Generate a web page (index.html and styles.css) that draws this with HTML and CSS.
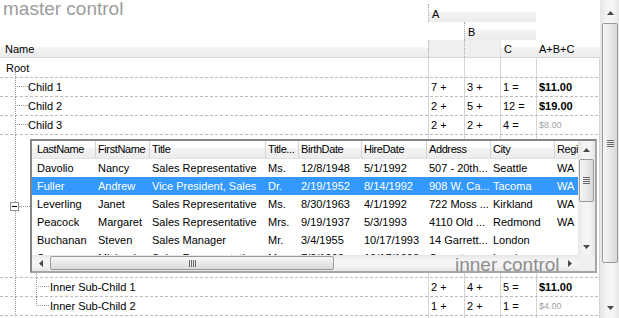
FILE: index.html
```html
<!DOCTYPE html>
<html>
<head>
<meta charset="utf-8">
<title>master control</title>
<link rel="stylesheet" href="styles.css">
</head>
<body>
<div class="grid">
  <div class="main">
    <div class="header">
      <div class="hrow">
        <div class="hcell span-a">A</div>
      </div>
      <div class="hrow">
        <div class="hcell span-b">B</div>
      </div>
      <div class="hrow hrow3">
        <div class="hcell hname">Name</div>
        <div class="hcell hsub"></div>
        <div class="hcell hsub hsub-b"></div>
        <div class="hcell hsep">C</div>
        <div class="hcell">A+B+C</div>
      </div>
    </div>
    <div class="body">
      <div class="row root-row">
        <div class="nm t-root">Root</div>
      </div>
      <div class="row">
        <div class="nm t-child">Child 1</div>
        <div class="v">7 +</div><div class="v">3 +</div><div class="v">1 =</div><div class="v sum">$11.00</div>
      </div>
      <div class="row">
        <div class="nm t-child">Child 2</div>
        <div class="v">2 +</div><div class="v">5 +</div><div class="v">12 =</div><div class="v sum">$19.00</div>
      </div>
      <div class="row">
        <div class="nm t-child">Child 3</div>
        <div class="v">2 +</div><div class="v">2 +</div><div class="v">4 =</div><div class="v sum dim">$8.00</div>
      </div>
      <div class="big">
        <div class="t-big"><span class="exp"></span></div>
        <div class="inner">
          <div class="inner-grid">
            <div class="table">
              <div class="ihead">
                <div class="ic">LastName</div><div class="ic">FirstName</div><div class="ic">Title</div><div class="ic">Title...</div><div class="ic">BirthDate</div><div class="ic">HireDate</div><div class="ic">Address</div><div class="ic">City</div><div class="ic">Region</div>
              </div>
              <div class="irow">
                <div class="ic">Davolio</div><div class="ic">Nancy</div><div class="ic">Sales Representative</div><div class="ic">Ms.</div><div class="ic">12/8/1948</div><div class="ic">5/1/1992</div><div class="ic">507 - 20th...</div><div class="ic">Seattle</div><div class="ic">WA</div>
              </div>
              <div class="irow sel">
                <div class="ic">Fuller</div><div class="ic">Andrew</div><div class="ic">Vice President, Sales</div><div class="ic">Dr.</div><div class="ic">2/19/1952</div><div class="ic">8/14/1992</div><div class="ic">908 W. Ca...</div><div class="ic">Tacoma</div><div class="ic">WA</div>
              </div>
              <div class="irow">
                <div class="ic">Leverling</div><div class="ic">Janet</div><div class="ic">Sales Representative</div><div class="ic">Ms.</div><div class="ic">8/30/1963</div><div class="ic">4/1/1992</div><div class="ic">722 Moss ...</div><div class="ic">Kirkland</div><div class="ic">WA</div>
              </div>
              <div class="irow">
                <div class="ic">Peacock</div><div class="ic">Margaret</div><div class="ic">Sales Representative</div><div class="ic">Mrs.</div><div class="ic">9/19/1937</div><div class="ic">5/3/1993</div><div class="ic">4110 Old ...</div><div class="ic">Redmond</div><div class="ic">WA</div>
              </div>
              <div class="irow">
                <div class="ic">Buchanan</div><div class="ic">Steven</div><div class="ic">Sales Manager</div><div class="ic">Mr.</div><div class="ic">3/4/1955</div><div class="ic">10/17/1993</div><div class="ic">14 Garrett...</div><div class="ic">London</div><div class="ic"></div>
              </div>
              <div class="irow">
                <div class="ic">Suyama</div><div class="ic">Michael</div><div class="ic">Sales Representative</div><div class="ic">Mr.</div><div class="ic">7/2/1963</div><div class="ic">10/17/1993</div><div class="ic">Coventry ...</div><div class="ic">London</div><div class="ic"></div>
              </div>
            </div>
            <div class="sb-v small">
              <div class="btn"><svg width="7" height="4" viewBox="0 0 7 4"><path d="M0 4H7L3.5 0Z" fill="#4a4a4a"/></svg></div>
              <div class="track">
                <div class="thumb thumb-v ithumb"><svg width="7" height="7" viewBox="0 0 7 7"><path d="M0 .5H7M0 2.5H7M0 4.5H7M0 6.5H7" stroke="#6a6a6a"/></svg></div>
              </div>
              <div class="btn"><svg width="7" height="4" viewBox="0 0 7 4"><path d="M0 0H7L3.5 4Z" fill="#4a4a4a"/></svg></div>
            </div>
            <div class="sb-h">
              <div class="btn"><svg width="4" height="7" viewBox="0 0 4 7"><path d="M4 0V7L0 3.5Z" fill="#4a4a4a"/></svg></div>
              <div class="track-h">
                <div class="thumb thumb-h"><svg width="7" height="7" viewBox="0 0 7 7"><path d="M.5 0V7M2.5 0V7M4.5 0V7M6.5 0V7" stroke="#6a6a6a"/></svg></div>
              </div>
              <div class="btn"><svg width="4" height="7" viewBox="0 0 4 7"><path d="M0 0V7L4 3.5Z" fill="#4a4a4a"/></svg></div>
            </div>
            <div class="corner"></div>
          </div>
          <div class="caption inner-cap">inner control</div>
        </div>
      </div>
      <div class="row">
        <div class="nm t-sub">Inner Sub-Child 1</div>
        <div class="v">2 +</div><div class="v">4 +</div><div class="v">5 =</div><div class="v sum">$11.00</div>
      </div>
      <div class="row">
        <div class="nm t-sub t-sub-last">Inner Sub-Child 2</div>
        <div class="v">1 +</div><div class="v">2 +</div><div class="v">1 =</div><div class="v sum dim">$4.00</div>
      </div>
    </div>
  </div>
  <div class="sb-v outer">
    <div class="btn"><svg width="7" height="4" viewBox="0 0 7 4"><path d="M0 4H7L3.5 0Z" fill="#4a4a4a"/></svg></div>
    <div class="track">
      <div class="thumb thumb-v othumb"><svg width="7" height="7" viewBox="0 0 7 7"><path d="M0 .5H7M0 2.5H7M0 4.5H7M0 6.5H7" stroke="#6a6a6a"/></svg></div>
    </div>
    <div class="btn"><svg width="7" height="4" viewBox="0 0 7 4"><path d="M0 0H7L3.5 4Z" fill="#4a4a4a"/></svg></div>
  </div>
  <div class="caption master-cap">master control</div>
</div>
</body>
</html>
```

FILE: styles.css
```css
* { box-sizing: border-box; }
html, body { margin: 0; padding: 0; background: #fff; }
body { font: 11px/1 "Liberation Sans", Arial, sans-serif; color: #000; }

.grid { position: relative; width: 619px; height: 318px; display: flex; overflow: hidden; background: #fff; }
.main { width: 600px; flex: none; display: flex; flex-direction: column; }

/* ---------- header ---------- */
.header { height: 58px; padding-top: 4px; flex: none; }
.hrow { display: grid; grid-template-columns: 428px 36px 36px 36px 64px; height: 18px; }
.hcell {
  display: flex; align-items: center; padding: 3px 0 0 3px; white-space: nowrap;
  background: linear-gradient(#fff 0, #fff 40%, #f3f3f3 45%, #ececec 100%);
}
.span-a { grid-column: 2 / 5; border-left: 1px dotted #a8a8a8; }
.span-b { grid-column: 3 / 5; border-left: 1px dotted #a8a8a8; }
.hrow3 { border-bottom: 1px solid #d5d5d5; }
.hrow3 .hcell { padding-top: 2px; }
.hname { padding-left: 5px; }
.hsub { background: #efefef; border-left: 1px dotted #a8a8a8; }
.hsep { border-left: 1px dotted #d0d0d0; }

/* ---------- body ---------- */
.body {
  flex: 1; overflow: hidden;
  background:
    linear-gradient(#d4d4d4, #d4d4d4) 428px 0 / 1px 100% no-repeat,
    linear-gradient(#d4d4d4, #d4d4d4) 464px 0 / 1px 100% no-repeat,
    linear-gradient(#d4d4d4, #d4d4d4) 500px 0 / 1px 100% no-repeat,
    linear-gradient(#d4d4d4, #d4d4d4) 536px 0 / 1px 100% no-repeat,
    linear-gradient(#d4d4d4, #d4d4d4) 599px 0 / 1px 100% no-repeat;
}
.row {
  display: grid; grid-template-columns: 428px 36px 36px 36px 64px;
  height: 19px; padding-bottom: 1px; align-items: center;
  background: repeating-linear-gradient(90deg, #bdbdbd 0 3px, transparent 3px 5px) 0 100% / 100% 1px no-repeat;
}
.root-row { height: 20px; padding-top: 1px; }
.v { padding-left: 3px; white-space: nowrap; }
.sum { font-weight: bold; }
.dim { font-weight: normal; font-size: 9px; color: #a3a3a3; }

.nm { align-self: stretch; display: flex; align-items: center; white-space: nowrap; margin-bottom: -1px; padding-bottom: 1px; }
.t-root {
  padding-left: 6px;
  background: repeating-linear-gradient(#999 0 1px, transparent 1px 2px) 15px 100% / 1px 6px no-repeat;
}
.t-child {
  padding-left: 28px;
  background:
    repeating-linear-gradient(#999 0 1px, transparent 1px 2px) 15px 0 / 1px 100% no-repeat,
    repeating-linear-gradient(90deg, #999 0 1px, transparent 1px 2px) 17px 8px / 11px 1px no-repeat;
}
.t-sub {
  padding-left: 50px;
  background:
    repeating-linear-gradient(#999 0 1px, transparent 1px 2px) 15px 0 / 1px 100% no-repeat,
    repeating-linear-gradient(#999 0 1px, transparent 1px 2px) 36px 0 / 1px 100% no-repeat,
    repeating-linear-gradient(90deg, #999 0 1px, transparent 1px 2px) 38px 8px / 11px 1px no-repeat;
}
.t-sub-last {
  background:
    repeating-linear-gradient(#999 0 1px, transparent 1px 2px) 15px 0 / 1px 100% no-repeat,
    repeating-linear-gradient(#999 0 1px, transparent 1px 2px) 36px 0 / 1px 9px no-repeat,
    repeating-linear-gradient(90deg, #999 0 1px, transparent 1px 2px) 38px 8px / 11px 1px no-repeat;
}

/* ---------- row hosting the inner control ---------- */
.big {
  display: flex; height: 143px;
  background:
    repeating-linear-gradient(90deg, #bdbdbd 0 3px, transparent 3px 5px) 0 100% / 100% 1px no-repeat,
    repeating-linear-gradient(#999 0 1px, transparent 1px 2px) 36px 138px / 1px 4px no-repeat;
}
.t-big {
  width: 30px; flex: none; display: flex; align-items: center;
  background:
    repeating-linear-gradient(#999 0 1px, transparent 1px 2px) 15px 0 / 1px 100% no-repeat,
    repeating-linear-gradient(90deg, #999 0 1px, transparent 1px 2px) 19px 50% / 11px 1px no-repeat;
}
.exp {
  width: 9px; height: 9px; margin-left: 10px; border: 1px solid #919191; background: #fff;
  display: flex; align-items: center; justify-content: center;
}
.exp::before { content: ""; width: 5px; height: 1px; background: #000; }

.inner {
  position: relative; width: 567px; height: 134px; margin-top: 4px; flex: none;
  border: 2px solid #868686; border-right-color: #a6a6a6; border-bottom-color: #a6a6a6;
  background: #fff; overflow: hidden;
}
.inner-grid { display: grid; grid-template-columns: 546px 17px; grid-template-rows: 114px 16px; height: 130px; }
.table { overflow: hidden; }
.ihead, .irow {
  display: grid; width: 583px;
  grid-template-columns: 64px 54px 116px 33px 63px 65px 64px 64px 60px;
  white-space: nowrap;
}
.ihead { height: 18px; letter-spacing: -0.4px; background: linear-gradient(#fff 0, #fff 40%, #f3f3f3 45%, #ececec 100%); border-bottom: 1px solid #e2e2e2; }
.ihead .ic { border-right: 1px solid #d5d5d5; }
.irow { height: 18px; }
.ic { display: flex; align-items: center; padding-left: 2px; overflow: hidden; }
.ic:first-child { padding-left: 5px; }
.sel { background: #3399ff; color: #fff; }

/* ---------- scrollbars ---------- */
.sb-v { display: flex; flex-direction: column; background: linear-gradient(90deg, #e6e6e6, #f4f4f4 30%, #f4f4f4 70%, #e6e6e6); }
.sb-v .btn { height: 17px; flex: none; display: flex; align-items: center; justify-content: center; }
.sb-v .track { flex: 1; padding: 1px 1px; }
.sb-h { display: flex; background: linear-gradient(#e6e6e6, #f4f4f4 30%, #f4f4f4 70%, #e6e6e6); }
.sb-h .btn { width: 17px; flex: none; display: flex; align-items: center; justify-content: center; }
.track-h { flex: 1; padding: 1px 1px; }
.thumb {
  border: 1px solid #9a9a9a; border-radius: 2px;
  display: flex; align-items: center; justify-content: center;
}
.thumb-v { background: linear-gradient(90deg, #f6f6f6, #e9e9e9 50%, #d9d9d9); }
.thumb-h { background: linear-gradient(#f6f6f6, #e9e9e9 50%, #d9d9d9); width: 284px; height: 100%; }
.ithumb { height: 43px; }
.corner { background: #f0f0f0; }

.outer { width: 19px; flex: none; padding: 4px 0 1px; border-left: 1px solid #e8e8e8; }
.outer .btn { height: 18px; }
.outer .track { padding: 1px 1px; }
.othumb { height: 240px; }

/* ---------- overlay captions ---------- */
.caption {
  position: absolute; font: 19px/19px "Liberation Sans", Arial, sans-serif; color: #9c9c9c; white-space: nowrap;
  pointer-events: none;
}
.master-cap { left: 3px; top: -1px; }
.inner-cap { left: 423px; top: 114px; color: #8e8e8e; }
```
